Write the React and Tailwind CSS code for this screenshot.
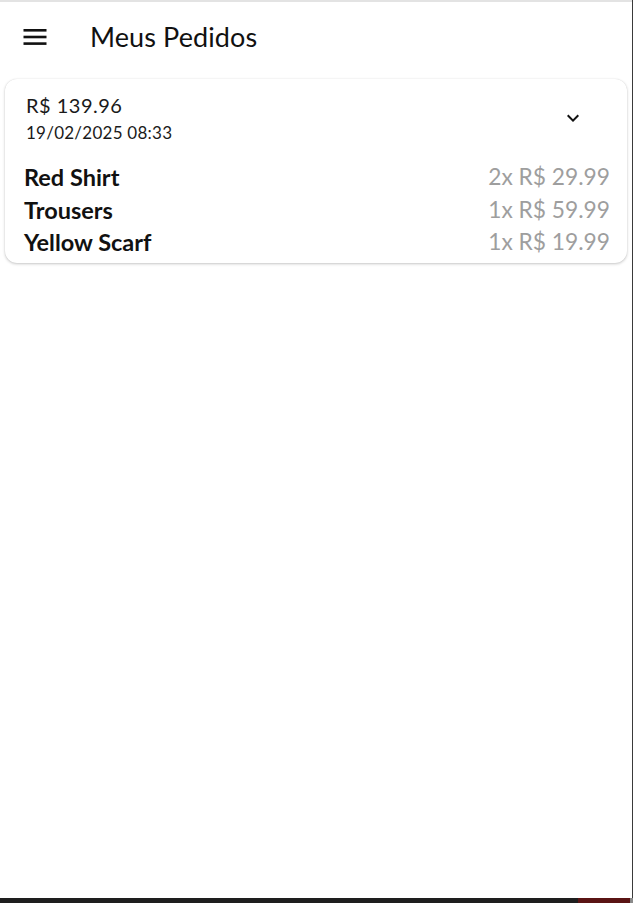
import React from "react";

const items = [
  { name: "Red Shirt", qty: "2x", price: "R$ 29.99" },
  { name: "Trousers", qty: "1x", price: "R$ 59.99" },
  { name: "Yellow Scarf", qty: "1x", price: "R$ 19.99" },
];

export default function App() {
  return (
    <div
      className="flex h-[903px] w-[633px] flex-col overflow-hidden bg-white text-black"
      style={{ fontFamily: "Lato, 'Noto Sans', sans-serif" }}
    >
      <div className="flex min-h-0 flex-1 flex-row">
        <div className="flex min-w-0 flex-1 flex-col">
          <div className="h-[2px] w-full bg-[#e3e3e3]" />
          <header className="flex h-[70px] items-center">
            <div className="ml-[23px] flex h-[24px] w-[24px] items-center justify-center">
              <svg width="24" height="18" viewBox="0 0 24 18">
                <rect x="0.5" y="1" width="23" height="2.6" fill="#111" />
                <rect x="0.5" y="7.7" width="23" height="2.6" fill="#111" />
                <rect x="0.5" y="14.3" width="23" height="2.6" fill="#111" />
              </svg>
            </div>
            <h1 className="ml-[43px] text-[27px] leading-[32px] font-normal tracking-[0.1px] text-[#111]">
              Meus Pedidos
            </h1>
          </header>
          <main className="flex-1 px-[5px] pt-[7px]">
            <div className="rounded-[12px] bg-white pb-[4px] shadow-[0_1px_3px_rgba(0,0,0,0.22),0_0_1px_rgba(0,0,0,0.12)]">
              <div className="flex items-center pt-[14px] pl-[21px] pr-[42px]">
                <div className="flex flex-1 flex-col">
                  <span className="text-[20px] leading-[24px] tracking-[0.5px] text-[#1a1a1a]">
                    R$ 139.96
                  </span>
                  <span className="mt-[6px] text-[17px] leading-[20px] tracking-[0.25px] text-[#1a1a1a]">
                    19/02/2025 08:33
                  </span>
                </div>
                <svg width="24" height="24" viewBox="0 0 24 24">
                  <path d="M16.59 8.59L12 13.17 7.41 8.59 6 10l6 6 6-6z" fill="#111" />
                </svg>
              </div>
              <div className="mt-[18px] flex flex-col pl-[19px] pr-[17px]">
                {items.map((it) => (
                  <div key={it.name} className="flex items-center justify-between leading-[32.5px]">
                    <span className="text-[23.5px] font-bold text-[#111]">{it.name}</span>
                    <span className="text-[22.75px] text-[#9e9e9e]">
                      {it.qty} {it.price}
                    </span>
                  </div>
                ))}
              </div>
            </div>
          </main>
        </div>
        <div className="w-[1px] bg-[#3a3a3a]" />
      </div>
      <div className="flex h-[5px] w-full">
        <div className="flex-1 bg-[#1e1e1e]" />
        <div className="w-[52px] bg-[#5a1414]" />
        <div className="w-[3px] bg-[#8a8a8a]" />
      </div>
    </div>
  );
}
